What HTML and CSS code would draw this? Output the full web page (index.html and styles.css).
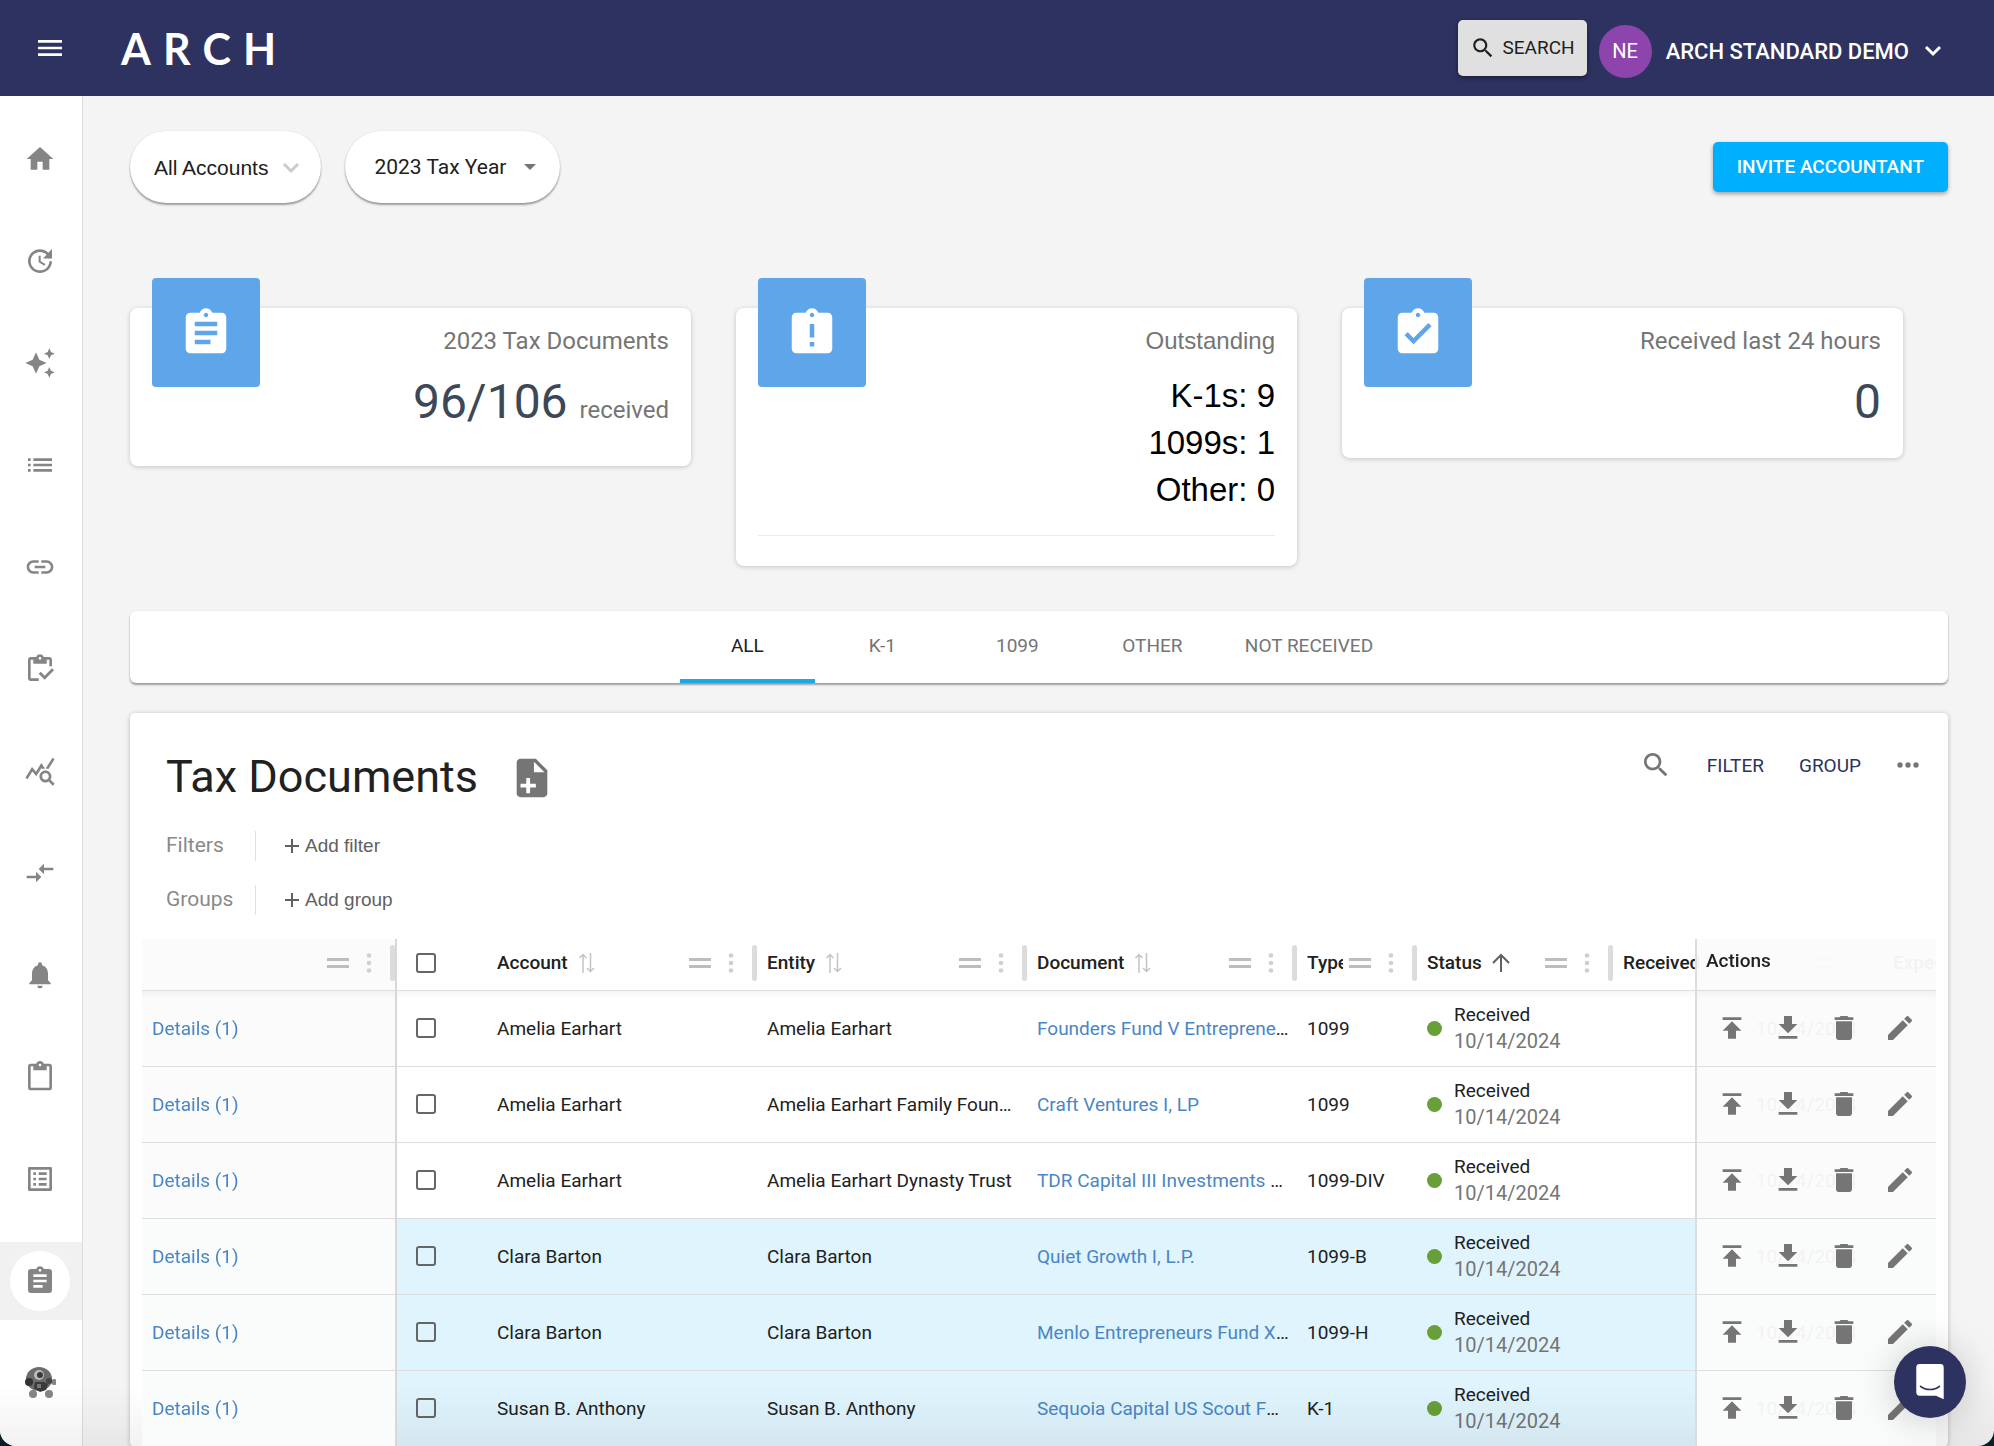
FILE: index.html
```html
<!DOCTYPE html>
<html lang="en">

<head>
    <meta charset="UTF-8">
    <meta name="viewport" content="width=device-width, initial-scale=1.0">
    <title>Arch - Tax Documents</title>
    <link rel="stylesheet" href="styles.css">
</head>

<body>
    <svg class="sprite" aria-hidden="true">
        <symbol id="i-menu" viewBox="0 0 24 24"><path d="M3 18h18v-2H3v2zm0-5h18v-2H3v2zm0-7v2h18V6H3z"/></symbol>
        <symbol id="i-search" viewBox="0 0 24 24"><path d="M15.5 14h-.79l-.28-.27C15.41 12.59 16 11.11 16 9.5 16 5.91 13.09 3 9.5 3S3 5.91 3 9.5 5.91 16 9.5 16c1.61 0 3.09-.59 4.23-1.57l.27.28v.79l5 4.99L20.49 19l-4.99-5zm-6 0C7.01 14 5 11.99 5 9.5S7.01 5 9.5 5 14 7.01 14 9.5 11.99 14 9.5 14z"/></symbol>
        <symbol id="i-home" viewBox="0 0 24 24"><path d="M10 20v-6h4v6h5v-8h3L12 3 2 12h3v8z"/></symbol>
        <symbol id="i-update" viewBox="0 0 24 24"><path d="M21 10.12h-6.78l2.74-2.82c-2.73-2.7-7.15-2.8-9.88-.1-2.73 2.71-2.73 7.08 0 9.79s7.15 2.71 9.88 0C18.32 15.65 19 14.08 19 12.1h2c0 1.98-.88 4.55-2.64 6.29-3.51 3.48-9.21 3.48-12.72 0-3.5-3.47-3.53-9.11-.02-12.58s9.14-3.47 12.65 0L21 3v7.12zM12.5 8v4.25l3.5 2.08-.72 1.21L11 13V8h1.5z"/></symbol>
        <symbol id="i-sparkle" viewBox="0 0 24 24"><path d="M19 9l1.25-2.75L23 5l-2.75-1.25L19 1l-1.25 2.75L15 5l2.75 1.25L19 9zm-7.5.5L9 4 6.5 9.5 1 12l5.5 2.5L9 20l2.5-5.5L17 12l-5.5-2.5zM19 15l-1.25 2.75L15 19l2.75 1.25L19 23l1.25-2.75L23 19l-2.75-1.25L19 15z"/></symbol>
        <symbol id="i-list" viewBox="0 0 24 24"><path d="M3 13h2v-2H3v2zm0 4h2v-2H3v2zm0-8h2V7H3v2zm4 4h14v-2H7v2zm0 4h14v-2H7v2zM7 7v2h14V7H7z"/></symbol>
        <symbol id="i-link" viewBox="0 0 24 24"><path d="M3.9 12c0-1.71 1.39-3.1 3.1-3.1h4V7H7c-2.76 0-5 2.24-5 5s2.24 5 5 5h4v-1.9H7c-1.71 0-3.1-1.39-3.1-3.1zM8 13h8v-2H8v2zm9-6h-4v1.9h4c1.71 0 3.1 1.39 3.1 3.1s-1.39 3.1-3.1 3.1h-4V17h4c2.76 0 5-2.24 5-5s-2.24-5-5-5z"/></symbol>
        <symbol id="i-inventory" viewBox="0 0 24 24"><path d="M5 5h2v3h10V5h2v5h2V5c0-1.1-.9-2-2-2h-4.18C14.4 1.84 13.3 1 12 1s-2.4.84-2.82 2H5c-1.1 0-2 .9-2 2v14c0 1.1.9 2 2 2h6v-2H5V5zm7-2c.55 0 1 .45 1 1s-.45 1-1 1-1-.45-1-1 .45-1 1-1zM21 11.5L15.5 17l-3-3-1.5 1.5 4.5 4.5 7-7z"/></symbol>
        <symbol id="i-stats" viewBox="0 0 24 24"><path d="M19.88 18.47c.44-.7.7-1.51.7-2.39 0-2.49-2.01-4.5-4.5-4.5s-4.5 2.01-4.5 4.5 2.01 4.5 4.49 4.5c.88 0 1.7-.26 2.39-.7L21.58 23 23 21.58l-3.12-3.11zm-3.8.11c-1.38 0-2.5-1.12-2.5-2.5s1.12-2.5 2.5-2.5 2.5 1.12 2.5 2.5-1.12 2.5-2.5 2.5zm-.36-8.5c-.74.02-1.45.18-2.1.45l-.55-.83-3.8 6.18-3.01-3.52-3.63 5.81L1 17l5-8 3 3.5L13 6l2.72 4.08zm2.59.5c-.64-.28-1.33-.45-2.05-.49L21.38 2 23 3.18l-4.69 7.4z"/></symbol>
        <symbol id="i-compare" viewBox="0 0 24 24"><path d="M9.01 14H2v2h7.01v3L13 15l-3.99-4v3zm5.98-1v-3H22V8h-7.01V5L11 9l3.99 4z"/></symbol>
        <symbol id="i-bell" viewBox="0 0 24 24"><path d="M12 22c1.1 0 2-.9 2-2h-4c0 1.1.89 2 2 2zm6-6v-5c0-3.07-1.64-5.64-4.5-6.32V4c0-.83-.67-1.5-1.5-1.5s-1.5.67-1.5 1.5v.68C7.63 5.36 6 7.92 6 11v5l-2 2v1h16v-1l-2-2z"/></symbol>
        <symbol id="i-paste" viewBox="0 0 24 24"><path d="M19 2h-4.18C14.4.84 13.3 0 12 0c-1.3 0-2.4.84-2.82 2H5c-1.1 0-2 .9-2 2v16c0 1.1.9 2 2 2h14c1.1 0 2-.9 2-2V4c0-1.1-.9-2-2-2zm-7 0c.55 0 1 .45 1 1s-.45 1-1 1-1-.45-1-1 .45-1 1-1zm7 18H5V4h2v3h10V4h2v16z"/></symbol>
        <symbol id="i-list-alt" viewBox="0 0 24 24"><path d="M19 5v14H5V5h14m1.1-2H3.9c-.5 0-.9.4-.9.9v16.2c0 .4.4.9.9.9h16.2c.4 0 .9-.5.9-.9V3.9c0-.5-.5-.9-.9-.9zM11 7h6v2h-6V7zm0 4h6v2h-6v-2zm0 4h6v2h-6zM7 7h2v2H7zm0 4h2v2H7zm0 4h2v2H7z"/></symbol>
        <symbol id="i-assignment" viewBox="0 0 24 24"><path d="M19 3h-4.18C14.4 1.84 13.3 1 12 1c-1.3 0-2.4.84-2.82 2H5c-1.1 0-2 .9-2 2v14c0 1.1.9 2 2 2h14c1.1 0 2-.9 2-2V5c0-1.1-.9-2-2-2zm-7 0c.55 0 1 .45 1 1s-.45 1-1 1-1-.45-1-1 .45-1 1-1zm2 14H7v-2h7v2zm3-4H7v-2h10v2zm0-4H7V7h10v2z"/></symbol>
        <symbol id="i-late" viewBox="0 0 24 24"><path d="M19 3h-4.18C14.4 1.84 13.3 1 12 1c-1.3 0-2.4.84-2.82 2H5c-1.1 0-2 .9-2 2v14c0 1.1.9 2 2 2h14c1.1 0 2-.9 2-2V5c0-1.1-.9-2-2-2zm-6 15h-2v-2h2v2zm0-4h-2V8h2v6zm-1-9c-.55 0-1-.45-1-1s.45-1 1-1 1 .45 1 1-.45 1-1 1z"/></symbol>
        <symbol id="i-turned-in" viewBox="0 0 24 24"><path d="M19 3h-4.18C14.4 1.84 13.3 1 12 1c-1.3 0-2.4.84-2.82 2H5c-1.1 0-2 .9-2 2v14c0 1.1.9 2 2 2h14c1.1 0 2-.9 2-2V5c0-1.1-.9-2-2-2zm-7 0c.55 0 1 .45 1 1s-.45 1-1 1-1-.45-1-1 .45-1 1-1zm-2 14l-4-4 1.41-1.41L10 14.17l6.59-6.59L18 9l-8 8z"/></symbol>
        <symbol id="i-note-add" viewBox="0 0 24 24"><path d="M14 2H6c-1.1 0-2 .9-2 2v16c0 1.1.9 2 2 2h12c1.1 0 2-.9 2-2V8l-6-6zm0 15h-3v3H9v-3H6v-2h3v-3h2v3h3v2zm-1-8V3.500L18.500 9H13z"/></symbol>
        <symbol id="i-more" viewBox="0 0 24 24"><circle cx="6" cy="12" r="2"/><circle cx="12" cy="12" r="2"/><circle cx="18" cy="12" r="2"/></symbol>
        <symbol id="i-upload" viewBox="0 0 24 24"><path d="M5 4v2h14V4H5zm0 10h4v6h6v-6h4l-7-7-7 7z"/></symbol>
        <symbol id="i-download" viewBox="0 0 24 24"><path d="M19 9h-4V3H9v6H5l7 7 7-7zM5 18v2h14v-2H5z"/></symbol>
        <symbol id="i-delete" viewBox="0 0 24 24"><path d="M6 19c0 1.1.9 2 2 2h8c1.1 0 2-.9 2-2V7H6v12zM19 4h-3.500l-1-1h-5l-1 1H5v2h14V4z"/></symbol>
        <symbol id="i-edit" viewBox="0 0 24 24"><path d="M3 17.25V21h3.750L17.810 9.940l-3.750-3.750L3 17.250zM20.710 7.040c.39-.39.39-1.02 0-1.410l-2.340-2.340c-.39-.39-1.020-.39-1.410 0l-1.830 1.830 3.750 3.750 1.830-1.830z"/></symbol>
        <symbol id="i-chevron" viewBox="0 0 18 12"><path d="M2 2l7 7 7-7" fill="none" stroke="currentColor" stroke-width="3"/></symbol>
        <symbol id="i-drag" viewBox="0 0 22 12"><path d="M0 1h22v3H0zM0 8h22v3H0z"/></symbol>
        <symbol id="i-dots" viewBox="0 0 6 20"><circle cx="3" cy="2.500" r="2.300"/><circle cx="3" cy="10" r="2.300"/><circle cx="3" cy="17.500" r="2.300"/></symbol>
        <symbol id="i-sort" viewBox="0 0 18 20"><path d="M5 20V2M1.500 5L5 1.500 8.500 5M12.500 0v18M9 15l3.500 3.500L16 15" fill="none" stroke="currentColor" stroke-width="1.500"/></symbol>
        <symbol id="i-up" viewBox="0 0 18 20"><path d="M9 19V2M1 10l8-8 8 8" fill="none" stroke="currentColor" stroke-width="2"/></symbol>
        <symbol id="i-plus" viewBox="0 0 14 14"><path d="M6 0h2v6h6v2H8v6H6V8H0V6h6z"/></symbol>
    </svg>

    <header class="topbar">
        <button class="icon-btn menu" aria-label="Menu"><svg class="icon"><use href="#i-menu"/></svg></button>
        <a class="logo" href="#" aria-label="ARCH"><span>A</span><span>R</span><span>C</span><span>H</span></a>
        <button class="search-btn"><svg class="icon"><use href="#i-search"/></svg>SEARCH</button>
        <div class="avatar">NE</div>
        <button class="user">ARCH STANDARD DEMO<svg class="chevron"><use href="#i-chevron"/></svg></button>
    </header>

    <div class="page">
        <nav class="sidebar">
            <a href="#" aria-label="Home"><svg class="icon"><use href="#i-home"/></svg></a>
            <a href="#" aria-label="Updates"><svg class="icon"><use href="#i-update"/></svg></a>
            <a href="#" aria-label="Insights"><svg class="icon"><use href="#i-sparkle"/></svg></a>
            <a href="#" aria-label="Holdings"><svg class="icon"><use href="#i-list"/></svg></a>
            <a href="#" aria-label="Links"><svg class="icon"><use href="#i-link"/></svg></a>
            <a href="#" aria-label="Tasks"><svg class="icon"><use href="#i-inventory"/></svg></a>
            <a href="#" aria-label="Analytics"><svg class="icon"><use href="#i-stats"/></svg></a>
            <a href="#" aria-label="Cash flows"><svg class="icon"><use href="#i-compare"/></svg></a>
            <a href="#" aria-label="Notifications"><svg class="icon"><use href="#i-bell"/></svg></a>
            <a href="#" aria-label="Documents"><svg class="icon"><use href="#i-paste"/></svg></a>
            <a href="#" aria-label="Reports"><svg class="icon"><use href="#i-list-alt"/></svg></a>
            <a href="#" class="active" aria-label="Tax"><span class="circle"><svg class="icon"><use href="#i-assignment"/></svg></span></a>
            <a href="#" aria-label="Assistant">
                <svg class="icon" viewBox="0 0 32 32">
                    <circle cx="9" cy="27" r="4" fill="#858585"/>
                    <circle cx="25" cy="27" r="4" fill="#858585"/>
                    <circle cx="30" cy="15" r="3" fill="#858585"/>
                    <ellipse cx="15" cy="12" rx="13" ry="12" fill="#6b6b6b"/>
                    <circle cx="5" cy="15" r="4" fill="#333"/>
                    <path d="M11 15h9l4 2-2 6-6 2-6-4z" fill="#3a3a3a"/>
                    <circle cx="25" cy="14" r="3" fill="#444"/>
                    <circle cx="15" cy="8" r="5" fill="#bbb"/>
                    <circle cx="16" cy="8" r="3" fill="#3a3a3a"/>
                    <path d="M13 17h4v4h-4z" fill="#777"/>
                </svg>
            </a>
        </nav>

        <main class="content">
            <div class="filters">
                <button class="pill accounts">All Accounts<svg class="chevron"><use href="#i-chevron"/></svg></button>
                <div class="pill-select">
                    <select class="pill" aria-label="Tax year">
                        <option>2023 Tax Year</option>
                    </select>
                    <span class="caret"></span>
                </div>
                <button class="invite">INVITE ACCOUNTANT</button>
            </div>

            <section class="cards">
                <div class="card">
                    <div class="card-icon"><svg><use href="#i-assignment"/></svg></div>
                    <div class="card-text">
                        <div class="card-title">2023 Tax Documents</div>
                        <div class="card-value">96/106 <span>received</span></div>
                    </div>
                </div>
                <div class="card">
                    <div class="card-icon"><svg><use href="#i-late"/></svg></div>
                    <div class="card-text arial">
                        <div class="card-title">Outstanding</div>
                        <div class="card-lines">
                            <div>K-1s: 9</div>
                            <div>1099s: 1</div>
                            <div>Other: 0</div>
                        </div>
                    </div>
                    <hr>
                </div>
                <div class="card small">
                    <div class="card-icon"><svg><use href="#i-turned-in"/></svg></div>
                    <div class="card-text">
                        <div class="card-title">Received last 24 hours</div>
                        <div class="card-value">0</div>
                    </div>
                </div>
            </section>

            <div class="tabs" role="tablist">
                <button class="tab selected" role="tab">ALL</button>
                <button class="tab" role="tab">K-1</button>
                <button class="tab" role="tab">1099</button>
                <button class="tab" role="tab">OTHER</button>
                <button class="tab" role="tab">NOT RECEIVED</button>
            </div>

            <section class="docs">
                <div class="docs-head">
                    <h1>Tax Documents</h1>
                    <button class="icon-btn note" aria-label="Add document"><svg><use href="#i-note-add"/></svg></button>
                    <div class="tools">
                        <button class="icon-btn" aria-label="Search documents"><svg class="tool-icon"><use href="#i-search"/></svg></button>
                        <button class="text-btn">FILTER</button>
                        <button class="text-btn">GROUP</button>
                        <button class="icon-btn" aria-label="More"><svg class="tool-icon"><use href="#i-more"/></svg></button>
                    </div>
                </div>
                <div class="options">
                    <span class="option-name">Filters</span>
                    <button class="add"><svg><use href="#i-plus"/></svg>Add filter</button>
                </div>
                <div class="options">
                    <span class="option-name">Groups</span>
                    <button class="add"><svg><use href="#i-plus"/></svg>Add group</button>
                </div>

                <div class="grid">
                    <table>
                        <colgroup>
                            <col class="c-details"><col class="c-check"><col class="c-wide"><col class="c-wide"><col class="c-wide">
                            <col class="c-type"><col class="c-status"><col class="c-wide"><col class="c-type"><col class="c-actions">
                        </colgroup>
                        <thead>
                            <tr>
                                <th class="pin-left"><div class="th"><span class="name"></span><svg class="drag"><use href="#i-drag"/></svg><svg class="dots"><use href="#i-dots"/></svg><i class="handle"></i></div></th>
                                <th class="check"><input type="checkbox" aria-label="Select all"></th>
                                <th><div class="th"><span class="name">Account<svg class="sort"><use href="#i-sort"/></svg></span><svg class="drag"><use href="#i-drag"/></svg><svg class="dots"><use href="#i-dots"/></svg><i class="handle"></i></div></th>
                                <th><div class="th"><span class="name">Entity<svg class="sort"><use href="#i-sort"/></svg></span><svg class="drag"><use href="#i-drag"/></svg><svg class="dots"><use href="#i-dots"/></svg><i class="handle"></i></div></th>
                                <th><div class="th"><span class="name">Document<svg class="sort"><use href="#i-sort"/></svg></span><svg class="drag"><use href="#i-drag"/></svg><svg class="dots"><use href="#i-dots"/></svg><i class="handle"></i></div></th>
                                <th><div class="th"><span class="name">Type</span><svg class="drag"><use href="#i-drag"/></svg><svg class="dots"><use href="#i-dots"/></svg><i class="handle"></i></div></th>
                                <th><div class="th"><span class="name">Status<svg class="sort up"><use href="#i-up"/></svg></span><svg class="drag"><use href="#i-drag"/></svg><svg class="dots"><use href="#i-dots"/></svg><i class="handle"></i></div></th>
                                <th><div class="th"><span class="name">Received</span><svg class="drag"><use href="#i-drag"/></svg><svg class="dots"><use href="#i-dots"/></svg><i class="handle"></i></div></th>
                                <th><div class="th"><span class="name">Expected</span></div></th>
                                <th class="pin-right">Actions</th>
                            </tr>
                        </thead>
                        <tbody>
                            <tr>
                                <td class="pin-left"><a href="#">Details (1)</a></td>
                                <td class="check"><input type="checkbox" aria-label="Select row"></td>
                                <td>Amelia Earhart</td>
                                <td>Amelia Earhart</td>
                                <td><a href="#">Founders Fund V Entrepreneurs</a></td>
                                <td>1099</td>
                                <td><div class="status"><i></i><div>Received<span>10/14/2024</span></div></div></td>
                                <td class="date">10/14/2024</td>
                                <td></td>
                                <td class="pin-right"><div class="actions"><button aria-label="Upload"><svg class="icon"><use href="#i-upload"/></svg></button><button aria-label="Download"><svg class="icon"><use href="#i-download"/></svg></button><button aria-label="Delete"><svg class="icon"><use href="#i-delete"/></svg></button><button aria-label="Edit"><svg class="icon"><use href="#i-edit"/></svg></button></div></td>
                            </tr>
                            <tr>
                                <td class="pin-left"><a href="#">Details (1)</a></td>
                                <td class="check"><input type="checkbox" aria-label="Select row"></td>
                                <td>Amelia Earhart</td>
                                <td>Amelia Earhart Family Foundation</td>
                                <td><a href="#">Craft Ventures I, LP</a></td>
                                <td>1099</td>
                                <td><div class="status"><i></i><div>Received<span>10/14/2024</span></div></div></td>
                                <td class="date">10/14/2024</td>
                                <td></td>
                                <td class="pin-right"><div class="actions"><button aria-label="Upload"><svg class="icon"><use href="#i-upload"/></svg></button><button aria-label="Download"><svg class="icon"><use href="#i-download"/></svg></button><button aria-label="Delete"><svg class="icon"><use href="#i-delete"/></svg></button><button aria-label="Edit"><svg class="icon"><use href="#i-edit"/></svg></button></div></td>
                            </tr>
                            <tr>
                                <td class="pin-left"><a href="#">Details (1)</a></td>
                                <td class="check"><input type="checkbox" aria-label="Select row"></td>
                                <td>Amelia Earhart</td>
                                <td>Amelia Earhart Dynasty Trust</td>
                                <td><a href="#">TDR Capital III Investments 2020</a></td>
                                <td>1099-DIV</td>
                                <td><div class="status"><i></i><div>Received<span>10/14/2024</span></div></div></td>
                                <td class="date">10/14/2024</td>
                                <td></td>
                                <td class="pin-right"><div class="actions"><button aria-label="Upload"><svg class="icon"><use href="#i-upload"/></svg></button><button aria-label="Download"><svg class="icon"><use href="#i-download"/></svg></button><button aria-label="Delete"><svg class="icon"><use href="#i-delete"/></svg></button><button aria-label="Edit"><svg class="icon"><use href="#i-edit"/></svg></button></div></td>
                            </tr>
                            <tr class="new">
                                <td class="pin-left"><a href="#">Details (1)</a></td>
                                <td class="check"><input type="checkbox" aria-label="Select row"></td>
                                <td>Clara Barton</td>
                                <td>Clara Barton</td>
                                <td><a href="#">Quiet Growth I, L.P.</a></td>
                                <td>1099-B</td>
                                <td><div class="status"><i></i><div>Received<span>10/14/2024</span></div></div></td>
                                <td class="date">10/14/2024</td>
                                <td></td>
                                <td class="pin-right"><div class="actions"><button aria-label="Upload"><svg class="icon"><use href="#i-upload"/></svg></button><button aria-label="Download"><svg class="icon"><use href="#i-download"/></svg></button><button aria-label="Delete"><svg class="icon"><use href="#i-delete"/></svg></button><button aria-label="Edit"><svg class="icon"><use href="#i-edit"/></svg></button></div></td>
                            </tr>
                            <tr class="new">
                                <td class="pin-left"><a href="#">Details (1)</a></td>
                                <td class="check"><input type="checkbox" aria-label="Select row"></td>
                                <td>Clara Barton</td>
                                <td>Clara Barton</td>
                                <td><a href="#">Menlo Entrepreneurs Fund XV, L.P.</a></td>
                                <td>1099-H</td>
                                <td><div class="status"><i></i><div>Received<span>10/14/2024</span></div></div></td>
                                <td class="date">10/14/2024</td>
                                <td></td>
                                <td class="pin-right"><div class="actions"><button aria-label="Upload"><svg class="icon"><use href="#i-upload"/></svg></button><button aria-label="Download"><svg class="icon"><use href="#i-download"/></svg></button><button aria-label="Delete"><svg class="icon"><use href="#i-delete"/></svg></button><button aria-label="Edit"><svg class="icon"><use href="#i-edit"/></svg></button></div></td>
                            </tr>
                            <tr class="new">
                                <td class="pin-left"><a href="#">Details (1)</a></td>
                                <td class="check"><input type="checkbox" aria-label="Select row"></td>
                                <td>Susan B. Anthony</td>
                                <td>Susan B. Anthony</td>
                                <td><a href="#">Sequoia Capital US Scout FM, L.P.</a></td>
                                <td>K-1</td>
                                <td><div class="status"><i></i><div>Received<span>10/14/2024</span></div></div></td>
                                <td class="date">10/14/2024</td>
                                <td></td>
                                <td class="pin-right"><div class="actions"><button aria-label="Upload"><svg class="icon"><use href="#i-upload"/></svg></button><button aria-label="Download"><svg class="icon"><use href="#i-download"/></svg></button><button aria-label="Delete"><svg class="icon"><use href="#i-delete"/></svg></button><button aria-label="Edit"><svg class="icon"><use href="#i-edit"/></svg></button></div></td>
                            </tr>
                        </tbody>
                    </table>
                </div>
            </section>
        </main>
    </div>

    <div class="fade"></div>
    <button class="chat" aria-label="Open chat">
        <svg viewBox="0 0 32 42"><path d="M4 0h24a4 4 0 0 1 4 4v37l-9-4H4a4 4 0 0 1-4-4V4a4 4 0 0 1 4-4z" fill="#fff"/><path d="M5 26c6 5 16 5 22 0" fill="none" stroke="#2e3260" stroke-width="2" stroke-linecap="round"/></svg>
    </button>
</body>

</html>
```
FILE: styles.css
```css
* {
    box-sizing: border-box;
}

html {
    background-color: #05202b;
}

body {
    margin: 0;
    height: 100vh;
    display: flex;
    flex-direction: column;
    overflow: hidden;
    background-color: #f4f4f4;
    border-radius: 0 0 16px 16px;
    color: #212121;
    font-family: Roboto, sans-serif;
    font-size: 19px;
}

button, select {
    border: none;
    background: none;
    padding: 0;
    font: inherit;
    color: inherit;
    cursor: pointer;
}

a {
    color: #4a86c5;
    text-decoration: none;
}

svg {
    fill: currentColor;
    display: block;
}

.sprite {
    position: absolute;
    width: 0;
    height: 0;
}

.icon {
    width: 32px;
    height: 32px;
}

.chevron {
    width: 18px;
    height: 12px;
}

/* header */

.topbar {
    flex: none;
    height: 96px;
    display: flex;
    align-items: center;
    padding: 0 52px 0 34px;
    background-color: #2e3260;
    color: #fff;
}

.logo {
    display: flex;
    gap: 12px;
    margin-left: 55px;
    margin-right: auto;
    color: #fff;
    font-family: Lato, sans-serif;
    font-weight: 700;
    font-size: 43px;
}

.search-btn {
    height: 56px;
    padding: 0 12px;
    display: flex;
    align-items: center;
    gap: 7px;
    margin-bottom: 1px;
    border-radius: 5px;
    background-color: #e0e0e0;
    color: #212121;
    box-shadow: 0 2px 5px rgba(0, 0, 0, 0.4);
}

.search-btn .icon {
    width: 26px;
    height: 26px;
}

.avatar {
    width: 53px;
    height: 53px;
    margin: 6px 14px 0 12px;
    border-radius: 50%;
    background-color: #8e44ad;
    font-size: 20px;
    line-height: 53px;
    text-align: center;
}

.user {
    display: flex;
    align-items: center;
    gap: 15px;
    padding-top: 6px;
    font-weight: 500;
    font-size: 22px;
}

/* page */

.page {
    flex: 1;
    min-height: 0;
    display: flex;
}

.sidebar {
    flex: none;
    width: 83px;
    padding-top: 24px;
    display: flex;
    flex-direction: column;
    gap: 24px;
    background-color: #fff;
    border-right: 1px solid #dcdcdc;
}

.sidebar a {
    flex: none;
    height: 78px;
    padding-right: 3px;
    display: flex;
    align-items: center;
    justify-content: center;
    color: #858585;
}

.sidebar .active {
    background-color: #f1f1f1;
}

.circle {
    width: 60px;
    height: 60px;
    display: grid;
    place-items: center;
    border-radius: 50%;
    background-color: #fff;
}

.content {
    flex: 1;
    min-width: 0;
    padding: 35px 46px 0 47px;
}

.filters {
    display: flex;
    align-items: center;
    gap: 24px;
}

.pill {
    height: 72px;
    border-radius: 36px;
    background-color: #fff;
    box-shadow: 0 2px 2px rgba(0, 0, 0, 0.35), 0 0 2px rgba(0, 0, 0, 0.1);
}

.accounts {
    display: flex;
    align-items: center;
    gap: 14px;
    padding: 2px 21px 0 24px;
    font-family: "Liberation Sans", Arial, sans-serif;
    font-size: 21px;
}

.accounts .chevron {
    color: #ccc;
}

.pill-select {
    display: grid;
    align-items: center;
}

.pill-select > * {
    grid-area: 1 / 1;
}

select.pill {
    appearance: none;
    padding: 0 53px 0 29px;
    font-size: 21px;
}

.caret {
    justify-self: end;
    margin-right: 24px;
    border: 6px solid transparent;
    border-top-color: #757575;
    border-bottom: none;
    pointer-events: none;
}

.invite {
    height: 50px;
    margin-left: auto;
    padding: 0 24px 2px;
    border-radius: 5px;
    background-color: #00b0ff;
    color: #fff;
    font-weight: 500;
    box-shadow: 0 2px 4px rgba(0, 0, 0, 0.35);
}

/* summary cards */

.cards {
    display: grid;
    grid-template-columns: repeat(3, 1fr);
    align-items: start;
    margin-top: 105px;
}

.card {
    min-height: 158px;
    margin-right: 45px;
    padding: 0 22px;
    display: grid;
    grid-template-columns: 108px 1fr;
    align-content: start;
    border-radius: 8px;
    background-color: #fff;
    box-shadow: 0 1px 5px rgba(0, 0, 0, 0.2);
}

.card.small {
    min-height: 150px;
}

.card-icon {
    height: 109px;
    margin-top: -30px;
    display: grid;
    place-items: center;
    border-radius: 4px;
    background-color: #5ea5ea;
    color: #fff;
}

.card-icon svg {
    width: 54px;
    height: 54px;
}

.card-text {
    padding-top: 18px;
    text-align: right;
    color: #757575;
}

.card-title {
    font-size: 24px;
    line-height: 30px;
}

.card-value {
    margin-top: 18px;
    font-size: 48px;
    line-height: 56px;
    color: #3c4858;
}

.card-value span {
    font-size: 24px;
    color: #757575;
}

.arial {
    font-family: "Liberation Sans", Arial, sans-serif;
}

.card-lines {
    margin-top: 16px;
    font-size: 33px;
    line-height: 47px;
    color: #000;
}

.card hr {
    grid-column: 1 / -1;
    width: 100%;
    margin: 22px 0 30px;
    border: none;
    border-top: 1px solid #eaeaea;
}

/* tabs */

.tabs {
    height: 72px;
    margin-top: 45px;
    display: flex;
    justify-content: center;
    border-radius: 6px;
    background-color: #fff;
    box-shadow: 0 2px 2px rgba(0, 0, 0, 0.35), 0 0 2px rgba(0, 0, 0, 0.1);
}

.tab {
    min-width: 135px;
    padding: 0 25px;
    border-bottom: 4px solid transparent;
    color: #757575;
}

.tab.selected {
    border-bottom-color: #1ba8e6;
    color: #212121;
}

/* documents */

.docs {
    margin-top: 30px;
    padding: 31px 12px 0;
    border-radius: 5px;
    background-color: #fff;
    box-shadow: 0 1px 5px rgba(0, 0, 0, 0.25);
}

.docs-head {
    display: flex;
    align-items: flex-start;
    padding: 0 12px 0 24px;
}

h1 {
    margin: 6px 0 0;
    font-weight: 400;
    font-size: 45px;
    line-height: 54px;
}

.note {
    margin: 11px 0 0 31px;
    color: #757575;
}

.note svg {
    width: 46px;
    height: 46px;
}

.tools {
    margin-left: auto;
    display: flex;
    align-items: center;
    gap: 31px;
    height: 42px;
    color: #757575;
}

.tool-icon {
    width: 32px;
    height: 32px;
}

.text-btn {
    margin-left: 4px;
    color: #2e3260;
}

.options {
    display: flex;
    align-items: center;
    height: 30px;
    margin-top: 24px;
    padding-left: 24px;
}

.docs-head + .options {
    margin-top: 27px;
}

.option-name {
    width: 90px;
    height: 30px;
    line-height: 28px;
    border-right: 1px solid #e0e0e0;
    font-size: 21px;
    color: #8a8a8a;
}

.add {
    display: flex;
    align-items: center;
    gap: 6px;
    margin-left: 29px;
    font-family: "Liberation Sans", Arial, sans-serif;
    color: #616161;
}

.add svg {
    width: 14px;
    height: 14px;
}

/* grid */

.grid {
    margin-top: 24px;
    overflow: hidden;
}

table {
    width: 2102px;
    table-layout: fixed;
    border-collapse: separate;
    border-spacing: 0;
}

.c-details { width: 255px; }
.c-check { width: 90px; }
.c-wide { width: 270px; }
.c-type { width: 120px; }
.c-status { width: 196px; }
.c-actions { width: 241px; }

th {
    height: 52px;
    padding: 0 0 4px;
    border-bottom: 1px solid #dedede;
    text-align: left;
    font-weight: 500;
}

.th {
    display: flex;
    align-items: center;
    padding-left: 10px;
}

.name {
    flex: 1;
    min-width: 0;
    display: flex;
    align-items: center;
    gap: 10px;
    overflow: hidden;
}

.sort {
    flex: none;
    width: 18px;
    height: 20px;
    color: #c4c4c4;
}

.sort.up {
    color: #616161;
}

.drag {
    flex: none;
    width: 22px;
    height: 12px;
    margin-left: 6px;
    color: #bdbdbd;
}

.dots {
    flex: none;
    width: 6px;
    height: 20px;
    margin: 0 18px 0 17px;
    color: #d0d0d0;
}

.handle {
    flex: none;
    width: 5px;
    height: 36px;
    border-radius: 3px;
    background-color: #dcdcdc;
}

td {
    height: 76px;
    padding: 0 6px 1px 10px;
    border-bottom: 1px solid #dedede;
    overflow: hidden;
    text-overflow: ellipsis;
    white-space: nowrap;
}

tbody tr:first-child td {
    box-shadow: inset 0 8px 8px -6px rgba(0, 0, 0, 0.06);
}

.new {
    background-color: #e0f4fd;
}

.check {
    padding-left: 19px;
}

input[type="checkbox"] {
    appearance: none;
    display: block;
    width: 20px;
    height: 20px;
    margin: 0;
    border: 2px solid #666;
    border-radius: 3px;
}

.pin-left, .pin-right {
    position: sticky;
    z-index: 1;
    background-color: rgba(251, 251, 251, 0.96);
}

.pin-left {
    left: 0;
    border-right: 2px solid #d8d8d8;
}

.pin-right {
    right: 0;
    border-left: 2px solid #dcdcdc;
}

th.pin-right {
    padding: 0 0 9px 9px;
}

.date {
    padding-right: 26px;
    text-align: right;
}

.status {
    display: flex;
    align-items: center;
    gap: 12px;
    line-height: 27px;
}

.status i {
    width: 15px;
    height: 15px;
    border-radius: 50%;
    background-color: #689f38;
}

.status span {
    display: block;
    font-size: 20px;
    color: #757575;
}

.actions {
    display: flex;
    gap: 24px;
    padding-left: 9px;
    color: #757575;
}

/* chat launcher */

.fade {
    position: fixed;
    left: 0;
    right: 0;
    bottom: 0;
    height: 60px;
    background: linear-gradient(transparent, rgba(0, 0, 0, 0.05));
    border-radius: 0 0 16px 16px;
    pointer-events: none;
}

.chat {
    position: fixed;
    z-index: 2;
    right: 28px;
    bottom: 28px;
    width: 72px;
    height: 72px;
    display: grid;
    place-items: center;
    border-radius: 50%;
    background-color: #2e3260;
    box-shadow: 0 2px 40px rgba(0, 0, 0, 0.2);
}

.chat svg {
    width: 32px;
    height: 36px;
}
```
